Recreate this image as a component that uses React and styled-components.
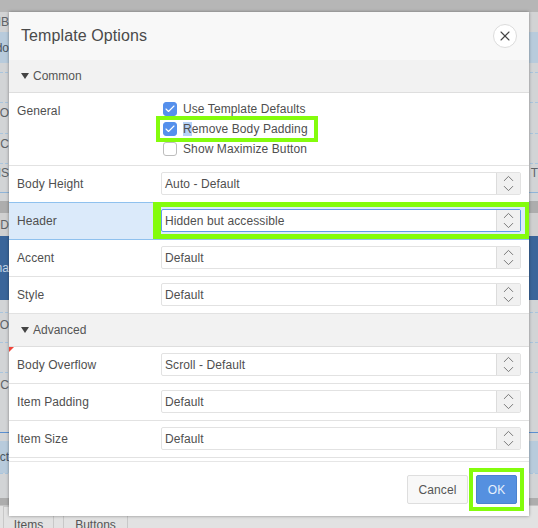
import React from "react";
import styled, { createGlobalStyle } from "styled-components";
import { X, ChevronUp, ChevronDown, Check } from "lucide-react";

const GlobalStyle = createGlobalStyle`
  html, body {
    margin: 0;
    padding: 0;
    background: #d2d4d6;
  }
  body {
    font-family: "Liberation Sans", Arial, sans-serif;
    color: #4a4a4a;
  }
`;

const Page = styled.div`
  position: relative;
  width: 538px;
  height: 528px;
  overflow: hidden;
`;

// Dimmed page that sits behind the dialog
const Backdrop = styled.div`
  display: flex;
  flex-direction: column;
  height: 100%;
`;

const Band = styled.div`
  height: ${(p) => p.$h}px;
  flex: none;
  background: ${(p) => p.$bg || "#d2d4d6"};
  border-top: ${(p) => (p.$line ? `1px dashed ${p.$line}` : "none")};
  box-sizing: border-box;
  padding-bottom: ${(p) => p.$pad || 0}px;
  display: flex;
  align-items: center;
  justify-content: space-between;
`;

const Cut = styled.span`
  width: 9px;
  overflow: hidden;
  display: flex;
  justify-content: flex-end;
  font-size: 12px;
  white-space: nowrap;
  color: ${(p) => p.$color || "#5f6367"};
`;

const Tabs = styled.div`
  flex: 1;
  display: flex;
  gap: 9px;
  padding-left: 3px;
  background: #e2e2e2;
  border-top: 1px solid #c4c4c4;
`;

const Tab = styled.div`
  width: ${(p) => p.$w}px;
  height: 26px;
  box-sizing: border-box;
  padding-top: 11px;
  border: 1px solid #c8c8c8;
  text-align: center;
  font-size: 12px;
  color: #555;
`;

const Dialog = styled.div`
  position: absolute;
  left: 9px;
  top: 12px;
  width: 520px;
  height: 504px;
  display: flex;
  flex-direction: column;
  background: #fff;
  box-shadow: 0 0 3px rgba(0, 0, 0, 0.4);
`;

const Header = styled.div`
  height: 48px;
  flex: none;
  box-sizing: border-box;
  padding: 0 12px;
  display: flex;
  align-items: center;
  justify-content: space-between;
  background: #f8f8f8;
`;

const Title = styled.h1`
  margin: 0;
  font-size: 16px;
  font-weight: 400;
  color: #4a4a4a;
  letter-spacing: 0.1px;
`;

const CloseButton = styled.button`
  width: 24px;
  height: 24px;
  padding: 0;
  display: flex;
  align-items: center;
  justify-content: center;
  border: 1px solid #dcdcdc;
  border-radius: 50%;
  background: #fff;
  color: #444;
`;

const Section = styled.div`
  height: ${(p) => p.$h}px;
  flex: none;
  box-sizing: border-box;
  padding-left: 12px;
  display: flex;
  align-items: center;
  gap: 4px;
  font-size: 12px;
  color: #555;
  background: #f2f2f2;
  border-bottom: 1px solid #dedede;
`;

const Caret = styled.span`
  width: 0;
  height: 0;
  border-left: 4px solid transparent;
  border-right: 4px solid transparent;
  border-top: 6px solid #444;
`;

const Row = styled.div`
  position: relative;
  height: ${(p) => p.$h || 37}px;
  flex: none;
  box-sizing: border-box;
  display: flex;
  align-items: ${(p) => (p.$top ? "flex-start" : "center")};
  padding-bottom: 1px;
  letter-spacing: 0.1px;
  background: ${(p) => (p.$active ? "#dbeafa" : "#fff")};
  border-bottom: 1px solid ${(p) => (p.$active ? "#8fc1ee" : "#e2e2e2")};
  box-shadow: ${(p) => (p.$active ? "0 -1px 0 #8fc1ee" : "none")};
`;

const Label = styled.label`
  width: 152px;
  flex: none;
  box-sizing: border-box;
  padding-left: 8px;
  padding-top: ${(p) => (p.$top ? "11px" : "0")};
  font-size: 12px;
  color: #4f4f4f;
`;

const Checks = styled.div`
  display: flex;
  flex-direction: column;
  padding-top: 6px;
  padding-left: 2px;
`;

const CheckRow = styled.div`
  position: relative;
  height: 20px;
  display: flex;
  align-items: center;
  gap: 6px;
  font-size: 12px;
  color: #4f4f4f;
`;

const Box = styled.span`
  width: 14px;
  height: 14px;
  box-sizing: border-box;
  display: flex;
  align-items: center;
  justify-content: center;
  border-radius: 3px;
  color: #fff;
  background: ${(p) => (p.$on ? "#5590ec" : "#fff")};
  border: 1px solid ${(p) => (p.$on ? "#5590ec" : "#bdbdbd")};
`;

const Selected = styled.span`
  background: #b5d1f6;
`;

const Select = styled.div`
  width: 360px;
  height: 23px;
  flex: none;
  box-sizing: border-box;
  display: flex;
  align-items: center;
  font-size: 12px;
  color: #4f4f4f;
  background: #fff;
  border: 1px solid ${(p) => (p.$focus ? "#5f9cec" : "#e2e2e2")};
  border-radius: 2px;
`;

const SelectText = styled.span`
  flex: 1;
  padding-left: 3px;
`;

const Arrows = styled.span`
  width: 23px;
  height: 100%;
  display: flex;
  flex-direction: column;
  align-items: center;
  justify-content: center;
  background: #f1f1f1;
  border-left: 1px solid #dcdcdc;
  color: #6f6f6f;
  & svg {
    margin: -3.5px 0;
  }
`;

const RedCorner = styled.span`
  position: absolute;
  left: 0;
  top: 0;
  width: 0;
  height: 0;
  border-top: 5px solid #f0453a;
  border-right: 5px solid transparent;
`;

// Green annotation frames drawn over the screenshot
const Frame = styled.span`
  position: absolute;
  box-sizing: border-box;
  pointer-events: none;
  border: solid #84fc0c;
  border-width: ${(p) => p.$border};
  left: ${(p) => p.$l}px;
  top: ${(p) => p.$t}px;
  width: ${(p) => p.$w}px;
  height: ${(p) => p.$h}px;
`;

const Footer = styled.div`
  flex: 1;
  margin-top: 3px;
  box-sizing: border-box;
  padding: 13px 12px 0 0;
  display: flex;
  justify-content: flex-end;
  gap: 8px;
  border-top: 1px solid #e6e6e6;
`;

const Button = styled.button`
  position: relative;
  width: ${(p) => p.$w}px;
  height: 29px;
  padding: 0;
  font-family: inherit;
  font-size: 12px;
  letter-spacing: 0.1px;
  border-radius: 2px;
  color: ${(p) => (p.$primary ? "#e8f1fc" : "#555")};
  background: ${(p) => (p.$primary ? "#5590e0" : "#f8f8f8")};
  border: 1px solid ${(p) => (p.$primary ? "#4a82d0" : "#dedede")};
`;

const Stepper = () => (
  <Arrows>
    <ChevronUp size={17} strokeWidth={1.3} />
    <ChevronDown size={17} strokeWidth={1.3} />
  </Arrows>
);

const SelectRow = ({ label, value, active, focus, children }) => (
  <Row $active={active}>
    <Label>{label}</Label>
    <Select $focus={focus}>
      <SelectText>{value}</SelectText>
      <Stepper />
    </Select>
    {children}
  </Row>
);

const Check2 = ({ on, children, frame }) => (
  <CheckRow>
    <Box $on={on}>{on && <Check size={12} strokeWidth={2.2} />}</Box>
    <span>{children}</span>
    {frame}
  </CheckRow>
);

export default function App() {
  return (
    <Page>
      <GlobalStyle />
      <Backdrop>
        <Band $h={12} $bg="#b6b6b6" />
        <Band $h={20} $bg="#d2d3d4">
          <Cut>LIB</Cut>
        </Band>
        <Band $h={31} $bg="#b8cbdc">
          <Cut $color="#4a5560">odo</Cut>
        </Band>
        <Band $h={9} />
        <Band $h={30} $line="#a9c5de" />
        <Band $h={31} $line="#a9c5de" $pad={10}>
          <Cut>CO</Cut>
        </Band>
        <Band $h={30} $line="#a9c5de" $pad={10}>
          <Cut>IC</Cut>
        </Band>
        <Band $h={29} $line="#a9c5de" $pad={10}>
          <Cut>IS</Cut>
          <Cut>T</Cut>
        </Band>
        <Band $h={1} $bg="#8fb4d8" />
        <Band $h={8} />
        <Band $h={12} $bg="#adadad" />
        <Band $h={23} $bg="#d0d0d0">
          <Cut>OD</Cut>
        </Band>
        <Band $h={64} $bg="#3a659a">
          <Cut $color="#c8d6e6">ma</Cut>
        </Band>
        <Band $h={12} />
        <Band $h={30} $line="#a9c5de" $pad={6}>
          <Cut>CO</Cut>
        </Band>
        <Band $h={30} $line="#a9c5de" />
        <Band $h={60} $line="#a9c5de" $pad={36}>
          <Cut>IC</Cut>
        </Band>
        <Band $h={1} $bg="#5a8fd0" />
        <Band $h={8} />
        <Band $h={32} $bg="#b8cbdc">
          <Cut $color="#4a5560">ct</Cut>
        </Band>
        <Band $h={25} $line="#a9c5de" />
        <Band $h={7} $bg="#adadad" />
        <Tabs>
          <Tab $w={51}>Items</Tab>
          <Tab $w={65}>Buttons</Tab>
        </Tabs>
      </Backdrop>

      <Dialog>
        <Header>
          <Title>Template Options</Title>
          <CloseButton>
            <X size={16} strokeWidth={1.6} />
          </CloseButton>
        </Header>

        <Section $h={33}>
          <Caret />
          Common
        </Section>

        <Row $h={73} $top>
          <Label $top>General</Label>
          <Checks>
            <Check2 on>Use Template Defaults</Check2>
            <Check2 on frame={<Frame $l={-7} $t={-3} $w={162} $h={26} $border="4px" />}>
              <Selected>R</Selected>emove Body Padding
            </Check2>
            <Check2>Show Maximize Button</Check2>
          </Checks>
        </Row>

        <SelectRow label="Body Height" value="Auto - Default" />
        <SelectRow label="Header" value="Hidden but accessible" active focus>
          <Frame $l={144} $t={-1} $w={376} $h={37} $border="5px 4px 5px 8px" />
        </SelectRow>
        <SelectRow label="Accent" value="Default" />
        <SelectRow label="Style" value="Default" />

        <Section $h={33}>
          <Caret />
          Advanced
        </Section>

        <SelectRow label="Body Overflow" value="Scroll - Default">
          <RedCorner />
        </SelectRow>
        <SelectRow label="Item Padding" value="Default" />
        <SelectRow label="Item Size" value="Default" />

        <Footer>
          <Button $w={61}>Cancel</Button>
          <Button $w={41} $primary>
            OK
            <Frame $l={-8} $t={-8} $w={55} $h={43} $border="4px" />
          </Button>
        </Footer>
      </Dialog>
    </Page>
  );
}
